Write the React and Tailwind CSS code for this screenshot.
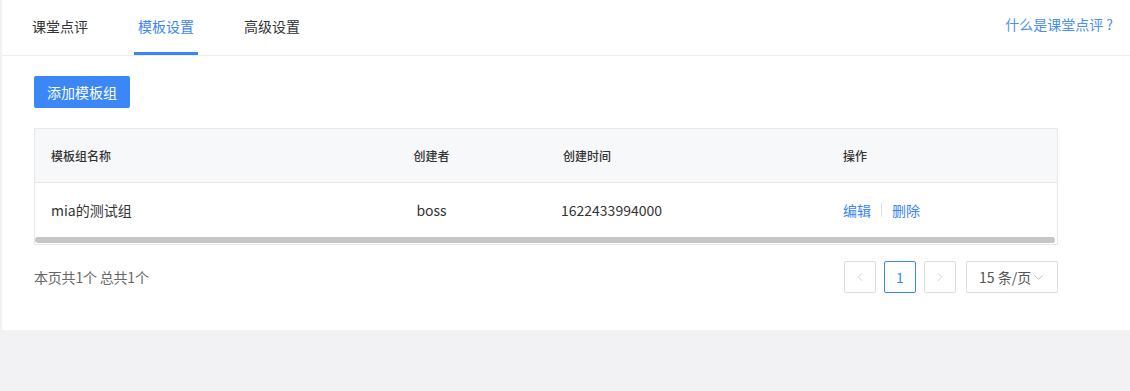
import { ChevronLeft, ChevronRight, ChevronDown } from "lucide-react";

const font = { fontFamily: '"Noto Sans CJK SC", "Noto Sans", sans-serif' };

export default function App() {
  const tabs = ["课堂点评", "模板设置", "高级设置"];

  return (
    <div className="w-[1130px] h-[391px] bg-[#f2f2f4] pl-[2px] overflow-hidden" style={font}>
      <div className="bg-white h-[330px] flex flex-col">
        {/* TABS */}
        <div className="flex items-center justify-between h-[56px] border-b border-[#ececec] pl-[26px] pr-[17px]">
          <div className="flex h-full gap-[42px]">
            {tabs.map((t, i) => (
              <div
                key={t}
                className={
                  i === 1
                    ? "h-full flex items-center px-[4px] text-[14px] text-[#3a86f7] border-b-[3px] border-[#3a86f7]"
                    : "h-full flex items-center px-[4px] text-[14px] text-[#333] border-b-[3px] border-transparent"
                }
              >
                {t}
              </div>
            ))}
          </div>
          <a className="text-[14px] text-[#4a90f0] mb-[6px]">什么是课堂点评 ?</a>
        </div>

        <div className="px-[32px] pt-[20px]">
          <button className="h-[32px] w-[96px] bg-[#3b87f7] text-white text-[14px] rounded-[2px]">
            添加模板组
          </button>

          {/* TABLE */}
          <div className="mt-[20px] w-[1024px] border border-[#e8e8e8]">
            <div className="flex h-[54px] items-center bg-[#f7f8fa] border-b border-[#e6e6e6] text-[12px] font-medium text-[#333]">
              <div className="w-[360px] pl-[16px]">模板组名称</div>
              <div className="w-[73px] text-center">创建者</div>
              <div className="w-[358px] pl-[95px]">创建时间</div>
              <div className="pl-[17px]">操作</div>
            </div>
            <div className="flex h-[54px] items-center text-[14px] text-[#333]">
              <div className="w-[360px] pl-[16px]">mia的测试组</div>
              <div className="w-[73px] text-center">boss</div>
              <div className="w-[358px] pl-[93px]">1622433994000</div>
              <div className="pl-[17px] flex items-center text-[14px] text-[#3a86f7]">
                <span>编辑</span>
                <span className="mx-[10px] w-px h-[14px] bg-[#e0e0e0]" />
                <span>删除</span>
              </div>
            </div>
            <div className="h-[7px] pr-[2px] pb-[1px]">
              <div className="h-[6px] bg-[#c6c6c6] rounded-[3px]" />
            </div>
          </div>

          {/* FOOTER */}
          <div className="flex items-center justify-between w-[1024px] mt-[16px]">
            <div className="text-[14px] text-[#666] tracking-[-0.2px]">本页共1个 总共1个</div>
            <div className="flex items-center gap-[8px]">
              <div className="w-[32px] h-[32px] border border-[#dcdcdc] rounded-[2px] flex items-center justify-center text-[#c4c4c4]">
                <ChevronLeft size={14} strokeWidth={1.3} />
              </div>
              <div className="w-[32px] h-[32px] border border-[#3a86f7] rounded-[2px] flex items-center justify-center text-[14px] text-[#3a86f7]">
                1
              </div>
              <div className="w-[32px] h-[32px] border border-[#dcdcdc] rounded-[2px] flex items-center justify-center text-[#c4c4c4]">
                <ChevronRight size={14} strokeWidth={1.3} />
              </div>
              <div className="ml-[2px] w-[92px] h-[32px] border border-[#dcdcdc] rounded-[2px] flex items-center pl-[12px] text-[14px] text-[#555]">
                <span>15 条/页</span>
                <ChevronDown size={15} strokeWidth={1.2} className="text-[#aaa]" />
              </div>
            </div>
          </div>
        </div>
      </div>
    </div>
  );
}
